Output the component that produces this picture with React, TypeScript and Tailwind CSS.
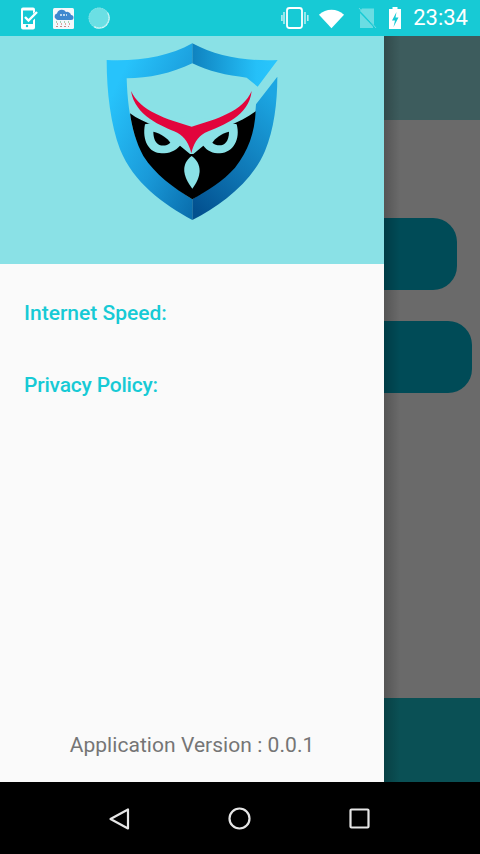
function Logo() {
  return (
    <svg viewBox="0 0 600 570" width="200" height="190" className="block">
      <defs>
        <linearGradient id="lb" x1="0.15" y1="0.2" x2="0.95" y2="1">
          <stop offset="0" stopColor="#27c3fb" />
          <stop offset="0.55" stopColor="#1a9ad9" />
          <stop offset="1" stopColor="#0a6fae" />
        </linearGradient>
        <linearGradient id="rt" x1="0" y1="0" x2="1" y2="0">
          <stop offset="0" stopColor="#0f82bf" />
          <stop offset="0.75" stopColor="#25c0f8" />
          <stop offset="1" stopColor="#29c6fd" />
        </linearGradient>
        <linearGradient id="rb" x1="0.7" y1="0" x2="0.15" y2="1">
          <stop offset="0" stopColor="#1ca6e2" />
          <stop offset="0.55" stopColor="#0f78b6" />
          <stop offset="1" stopColor="#02508f" />
        </linearGradient>
      </defs>
      <path d="M50 72 C150 76 235 62 307 22 L307 82 C245 112 175 127 110 127 C112 190 118 240 132 290 C160 385 240 445 307 490 L307 552 C220 505 130 440 90 340 C62 265 50 170 50 72 Z" fill="url(#lb)" />
      <path d="M307 22 C380 62 470 76 563 72 L503 152 L470 125 C410 118 355 106 307 82 Z" fill="url(#rt)" />
      <path d="M562 122 C562 200 552 280 525 345 C485 440 390 510 307 552 L307 490 C380 445 445 385 475 310 C488 280 495 250 498 205 Z" fill="url(#rb)" />
      <path d="M120 232 C160 262 230 285 307 300 C380 285 450 262 497 226 C494 290 475 345 435 395 C400 435 350 465 307 490 C250 455 195 415 160 360 C138 320 126 275 120 232 Z" fill="#000" />
      <path d="M165 265 C155 315 178 352 215 352 C238 352 256 345 270 329 L300 354 L310 354 L340 329 C352 345 368 352 390 352 C430 350 452 310 440 265 L307 240 Z" fill="#8ae1e6" />
      <path d="M190 287 C212 292 232 306 241 320 C225 335 190 335 190 287 Z" fill="#000" />
      <path d="M417 287 C395 292 376 306 367 320 C385 335 417 332 417 287 Z" fill="#000" />
      <path d="M123 165 C150 225 230 250 305 272 C380 250 460 225 485 165 C477 240 400 268 345 290 C322 302 310 325 304 352 C298 325 285 302 262 290 C215 270 135 240 123 165 Z" fill="#e2053c" />
      <path d="M305 360 C272 385 278 420 307 458 C335 420 338 385 305 360 Z" fill="#8ae1e6" />
    </svg>
  );
}

function StatusLeft() {
  return (
    <div className="flex items-center">
      <svg width="18" height="24" viewBox="0 0 18 24" className="ml-[20px]">
        <path d="M3 1.5h10a2 2 0 0 1 2 2v2.5l-2 2V4.5H3v13.5h10v-3.5l2-2v9a2 2 0 0 1-2 2H3a2 2 0 0 1-2-2V3.5a2 2 0 0 1 2-2Z" fill="#fff" />
        <circle cx="7" cy="20" r="1.2" fill="#17cad5" />
        <path d="M5 11l3.5 3.5L17 6" fill="none" stroke="#fff" strokeWidth="2.4" />
      </svg>
      <svg width="21" height="21" viewBox="0 0 21 21" className="ml-[15px]">
        <rect width="21" height="21" rx="1.5" fill="#f4f8fb" />
        <path d="M3 11a3 3 0 0 1 1-5.5A5 5 0 0 1 13 4a4 4 0 0 1 5 3 2.5 2.5 0 0 1 0 5H5a3 3 0 0 1-2-1Z" fill="#3f88cf" />
        <path d="M7 7h7" stroke="#b9d6ef" strokeWidth="2" strokeDasharray="2 1" />
        <path d="M3 14h14" stroke="#5aa86a" strokeWidth="1" strokeDasharray="1 3" />
        <path d="M4 16h14" stroke="#c6554f" strokeWidth="1" strokeDasharray="1 3" />
        <path d="M3 18.5h13" stroke="#c98a8a" strokeWidth="1" strokeDasharray="2 2" />
      </svg>
      <svg width="22" height="22" viewBox="0 0 22 22" className="ml-[14px]">
        <circle cx="11" cy="11" r="10.5" fill="#6bdfe4" />
        <path d="M19.5 5.5A10 10 0 0 1 6 19.6" fill="none" stroke="#d8f7f8" strokeWidth="1.3" />
        <circle cx="11" cy="11" r="10" fill="none" stroke="#8be6ea" strokeWidth="1" strokeDasharray="1 1.5" />
      </svg>
    </div>
  );
}

function StatusRight() {
  return (
    <div className="flex items-center">
      <svg width="28" height="24" viewBox="0 0 28 24">
        <rect x="6" y="2" width="15" height="20" rx="2.5" fill="none" stroke="#fff" strokeWidth="1.8" />
        <path d="M3 6v12M0.9 9v6M24 6v12M26.8 9v6" stroke="#b7eef1" strokeWidth="1.6" />
      </svg>
      <svg width="27" height="21" viewBox="0 0 28 21" className="ml-[9px]">
        <path d="M1 6.5C5 3 9 1.5 14 1.5S23 3 27 6.5L14 20.5Z" fill="#fff" />
      </svg>
      <svg width="20" height="22" viewBox="0 0 20 22" className="ml-[12px]">
        <path d="M5 1.5h12v16.5L3 4Z" fill="#6adde3" />
        <path d="M3 6v15h13v-1.5L3 6Z" fill="#6adde3" />
        <path d="M2 1l17 20" stroke="#6adde3" strokeWidth="1" />
      </svg>
      <svg width="12" height="24" viewBox="0 0 12 24" className="ml-[12px]">
        <path d="M3.5 1h5v2H12v20H0V3h3.5Z" fill="#fff" />
        <path d="M7.5 6L3 14.5h3L4.5 21 9.5 11.5h-3Z" fill="#17cad5" />
      </svg>
      <span className="ml-[12px] mr-[12px] text-[22px] leading-[24px] text-white font-['Roboto',sans-serif]">23:34</span>
    </div>
  );
}

export default function App() {
  return (
    <div className="w-[480px] h-[854px] flex flex-col overflow-hidden font-['Roboto',sans-serif] bg-black">
      <div className="h-9 shrink-0 bg-[#17cad5] flex items-center justify-between">
        <StatusLeft />
        <StatusRight />
      </div>
      <div className="relative h-[746px] shrink-0 flex bg-[#6a6a6a]">
        <aside className="w-96 shrink-0 flex flex-col bg-[#fafafa] relative z-10">
          <div className="h-[228px] shrink-0 bg-[#8ae1e6] flex justify-center">
            <div className="-ml-[4px]"><Logo /></div>
          </div>
          <div className="flex-1 flex flex-col px-6 pt-[35px]">
            <p className="text-[21px] leading-[28px] font-medium text-[#17cad5]">Internet Speed:</p>
            <p className="mt-[44px] text-[21px] leading-[28px] tracking-[-0.2px] font-medium text-[#17cad5]">Privacy Policy:</p>
            <p className="mt-auto mb-[23px] text-center text-[21px] leading-[28px] tracking-[0.05px] text-[#757575]">Application Version : 0.0.1</p>
          </div>
        </aside>
        <div className="relative flex-1 flex flex-col">
          <div className="h-[84px] shrink-0 bg-[#3d5c5d]" />
          <div className="flex-1 pt-[98px] flex flex-col gap-[31px]">
            <div className="w-[73px] h-[72px] rounded-r-[24px] bg-[#004b57]" />
            <div className="w-[88px] h-[72px] rounded-r-[24px] bg-[#004b57]" />
          </div>
          <div className="h-[84px] shrink-0 bg-[#0a5055]" />
          <div className="absolute inset-y-0 left-0 w-4 bg-gradient-to-r from-black/20 to-transparent" />
        </div>
      </div>
      <div className="flex-1 flex items-center">
        <svg width="480" height="72" viewBox="0 0 480 72" className="block">
          <path d="M128 27.5v19L110.5 37Z" fill="none" stroke="#e6e6e6" strokeWidth="2.2" strokeLinejoin="round" />
          <circle cx="239.5" cy="36.5" r="10" fill="none" stroke="#e6e6e6" strokeWidth="2.2" />
          <rect x="350.5" y="27.5" width="18" height="18" rx="1" fill="none" stroke="#e6e6e6" strokeWidth="2.2" />
        </svg>
      </div>
    </div>
  );
}
